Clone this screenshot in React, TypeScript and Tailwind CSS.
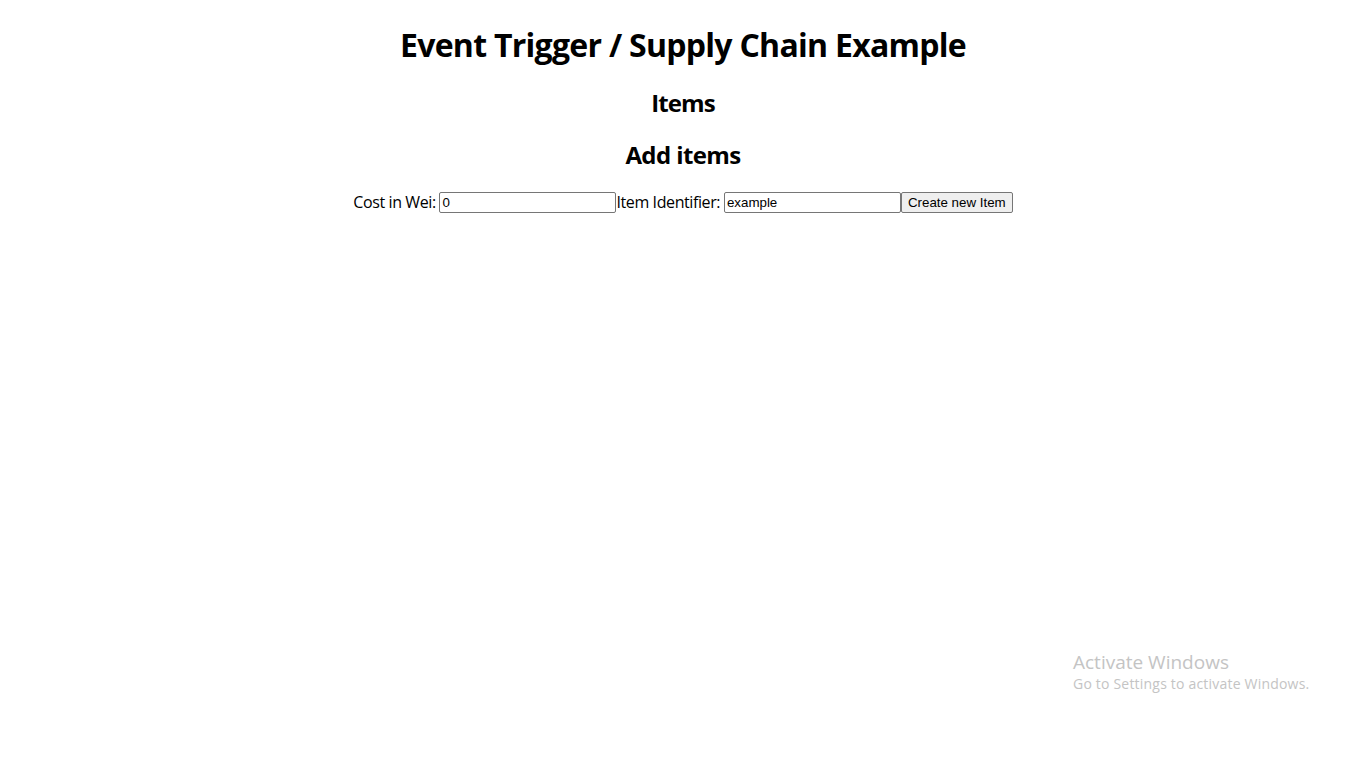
export default function App() {
  return (
    <div className="relative w-[1366px] h-[768px] bg-white text-black overflow-hidden" style={{ fontFamily: '"Open Sans", "Noto Sans", sans-serif' }}>
      <div className="pt-[23px] text-center">
        <h1 className="text-[32px] font-bold leading-[43px] mb-[21px] tracking-[-0.72px]">Event Trigger / Supply Chain Example</h1>
        <h2 className="text-[24px] font-bold leading-[32px] mb-[20px] tracking-[-0.9px]">Items</h2>
        <h2 className="text-[24px] font-bold leading-[32px] mb-[21px] tracking-[-0.6px]">Add items</h2>
        <div className="flex items-center justify-center text-[16px] leading-[21px] tracking-[-0.4px]">
          <span>Cost in Wei:&nbsp;</span>
          <input
            defaultValue="0"
            className="w-[177px] h-[21px] border border-[#767676] rounded-[2px] px-[2px] text-[13.33px] bg-white tracking-normal"
            style={{ fontFamily: '"Liberation Sans", Arial, sans-serif' }}
          />
          <span>Item Identifier:&nbsp;</span>
          <input
            defaultValue="example"
            className="w-[177px] h-[21px] border border-[#767676] rounded-[2px] px-[2px] text-[13.33px] bg-white tracking-normal"
            style={{ fontFamily: '"Liberation Sans", Arial, sans-serif' }}
          />
          <button
            className="h-[21px] px-[6px] border border-[#767676] rounded-[2px] bg-[#efefef] text-[13.33px] leading-none tracking-normal"
            style={{ fontFamily: '"Liberation Sans", Arial, sans-serif' }}
          >
            Create new Item
          </button>
        </div>
      </div>
      <div className="absolute left-[1073px] top-[650px] text-[#c4c4c4]">
        <div className="text-[19px] leading-[24px]">Activate Windows</div>
        <div className="text-[14px] leading-[20px] tracking-[0.2px]">Go to Settings to activate Windows.</div>
      </div>
    </div>
  );
}
